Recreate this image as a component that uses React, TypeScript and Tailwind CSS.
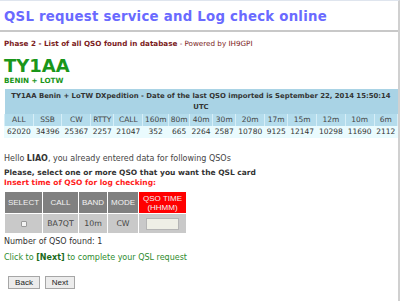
import { FC } from "react";

const bands = [
  ["ALL", "62020"],
  ["SSB", "34396"],
  ["CW", "25367"],
  ["RTTY", "2257"],
  ["CALL", "21047"],
  ["160m", "352"],
  ["80m", "665"],
  ["40m", "2264"],
  ["30m", "2587"],
  ["20m", "10780"],
  ["17m", "9125"],
  ["15m", "12147"],
  ["12m", "10298"],
  ["10m", "11690"],
  ["6m", "2112"],
];

const StatsTable: FC = () => {
  return (
    <table className="w-[394px] border-collapse text-[7.5px] leading-[12px]">
      <thead>
        <tr className="bg-[#a9d3e5]">
          <th
            colSpan={15}
            className="px-0 pt-[2px] pb-[1px] text-center font-bold text-[#333] text-[6.9px] leading-[11px] whitespace-nowrap"
          >
            TY1AA Benin + LoTW DXpedition - Date of the last QSO imported is
            September 22, 2014 15:50:14
            <br />
            UTC
          </th>
        </tr>
        <tr className="bg-[#b4dcec]">
          {bands.map(([label]) => (
            <td
              key={label}
              className="border-x border-[#d6eef7] text-center font-normal text-[#444] h-[12px]"
            >
              {label}
            </td>
          ))}
        </tr>
      </thead>
      <tbody>
        <tr className="bg-[#eafbfe]">
          {bands.map(([label, value]) => (
            <td
              key={label}
              className="border-x border-[#eafbfe] text-center text-[#333] h-[12px]"
            >
              {value}
            </td>
          ))}
        </tr>
      </tbody>
    </table>
  );
};

const QsoTable: FC = () => {
  const head = "border border-white font-normal text-[#f2f2f2] text-center";
  return (
    <table
      className="w-[183px] border-collapse text-[8px] leading-[9px]"
      style={{ fontFamily: "'Liberation Sans', Arial, sans-serif" }}
    >
      <thead>
        <tr className="h-[22px]">
          <th className={`${head} bg-[#808080] w-[38px]`}>SELECT</th>
          <th className={`${head} bg-[#808080] w-[36px]`}>CALL</th>
          <th className={`${head} bg-[#808080] w-[29px]`}>BAND</th>
          <th className={`${head} bg-[#808080] w-[31px]`}>MODE</th>
          <th className={`${head} bg-[#ff0000]`}>
            QSO TIME
            <br />
            (HHMM)
          </th>
        </tr>
      </thead>
      <tbody>
        <tr
          className="h-[20px] bg-[#c9c9c9] text-[#444] text-[7.8px]"
          style={{ fontFamily: "'DejaVu Sans', Verdana, sans-serif" }}
        >
          <td className="border border-white text-center">
            <span className="inline-block w-[6px] h-[6px] border border-[#9a9a9a] bg-[#f4f4f4] rounded-[1px] align-middle" />
          </td>
          <td className="border border-white text-center">BA7QT</td>
          <td className="border border-white text-center">10m</td>
          <td className="border border-white text-center">CW</td>
          <td className="border border-white text-center">
            <span className="inline-block w-[33px] h-[12px] bg-[#efefe6] border border-[#b5b5b5] align-middle" />
          </td>
        </tr>
      </tbody>
    </table>
  );
};

const App: FC = () => {
  return (
    <div
      className="w-[400px] h-[301px] bg-white border-t border-[#dfe5ee] border-r-2 border-r-[#d0d0d0] overflow-hidden"
      style={{ fontFamily: "'DejaVu Sans', Verdana, sans-serif" }}
    >
      <h1 className="pl-1 pt-[6px] text-[13.3px] leading-[20px] tracking-[0.25px] font-bold text-[#6a6aff] whitespace-nowrap">
        QSL request service and Log check online
      </h1>
      <div className="mt-[3px] h-[2px] bg-[#c8c8c8]" />
      <p className="pl-1 mt-[7px] text-[7.2px] leading-[10px] text-[#7b1c1c] whitespace-nowrap">
        <b>Phase 2 - List of all QSO found in database</b> - Powered by IH9GPI
      </p>
      <div className="pl-1 mt-[7px]">
        <h2 className="text-[18px] leading-[20px] font-bold text-[#1a961a]">TY1AA</h2>
        <p className="text-[7.2px] leading-[10px] font-bold text-[#1a961a]">BENIN + LOTW</p>
      </div>
      <div className="pl-1 mt-[3px]">
        <StatsTable />
      </div>
      <div className="pl-1 mt-[16px] text-[8px] leading-[10px] text-[#444]">
        <p>
          Hello <b className="text-[#333]">LIAO</b>, you already entered data for
          following QSOs
        </p>
        <p className="mt-[4px] font-bold text-[#333] text-[7.5px]">
          Please, select one or more QSO that you want the QSL card
        </p>
        <p className="font-bold text-[#ff1a1a] text-[7.5px]">Insert time of QSO for log checking:</p>
        <div className="mt-[3px]">
          <QsoTable />
        </div>
        <p className="mt-[3px] text-[#333]">Number of QSO found: 1</p>
        <p className="mt-[6px] text-[#2e8b2e]">
          Click to <b className="text-[#1c6b1c]">[Next]</b> to complete your QSL
          request
        </p>
        <div className="mt-[13px] pl-[4px] flex gap-[5px]">
          <button className="w-[32px] h-[13px] border border-[#a6a6a6] bg-[#ececec] text-[8px] leading-[10px] text-[#222]" style={{ fontFamily: "'Liberation Sans', Arial, sans-serif" }}>
            Back
          </button>
          <button className="w-[30px] h-[13px] border border-[#a6a6a6] bg-[#ececec] text-[8px] leading-[10px] text-[#222]" style={{ fontFamily: "'Liberation Sans', Arial, sans-serif" }}>
            Next
          </button>
        </div>
      </div>
    </div>
  );
};

export default App;
